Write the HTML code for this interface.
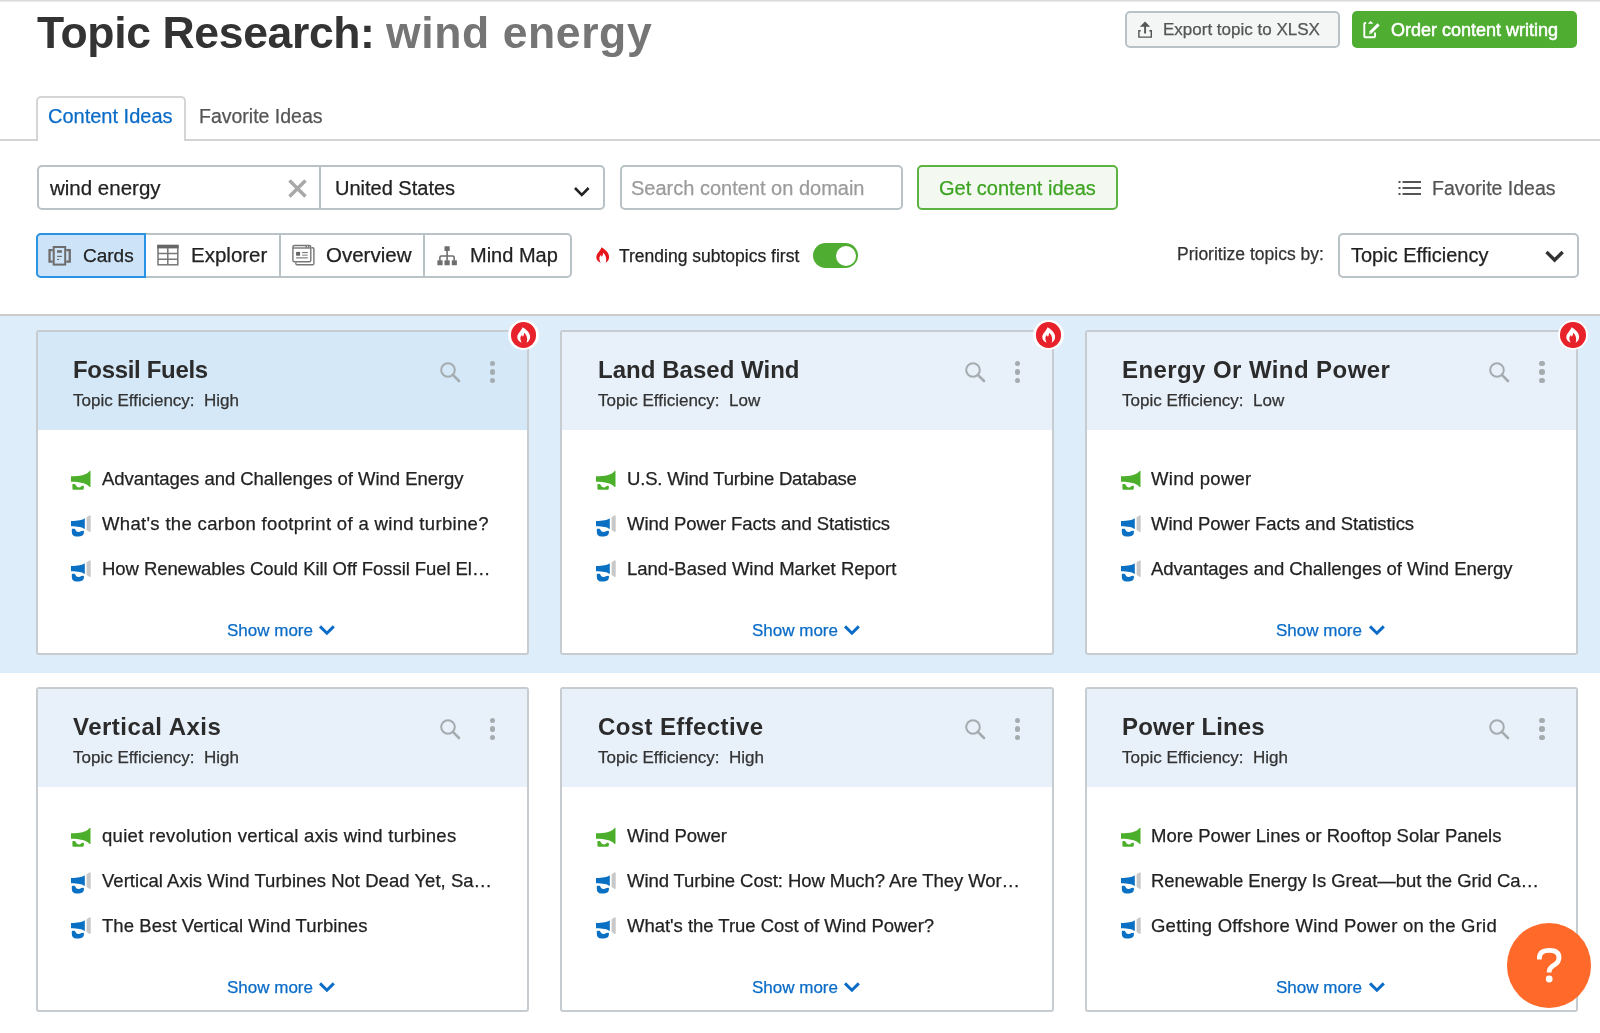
<!DOCTYPE html>
<html><head><meta charset="utf-8"><title>Topic Research</title>
<style>
html,body{margin:0;padding:0;background:#fff;width:1600px;height:1033px;overflow:hidden;position:relative;}
.t{position:absolute;white-space:nowrap;line-height:1;font-family:"Liberation Sans", sans-serif;will-change:transform;}
.b{position:absolute;}
svg.b{overflow:visible;}
</style></head><body>
<div class="b" style="left:0px;top:0px;width:1600px;height:1px;background:#d9dadc;"></div>
<div class="b" style="left:0px;top:1px;width:1600px;height:1px;background:#eceded;"></div>
<div class="t" style="left:37.00px;top:11.00px;font-size:44.5px;color:#333;font-weight:bold;letter-spacing:-0.357px;">Topic Research:</div>
<div class="t" style="left:386.00px;top:11.00px;font-size:44.5px;color:#757575;font-weight:bold;letter-spacing:0.600px;">wind energy</div>
<div class="b" style="left:1125px;top:11px;width:215px;height:37px;box-sizing:border-box;border:2px solid #b9c2c7;border-radius:5px;background:#f4f5f5;"></div>
<svg class="b" style="left:1132px;top:16px" width="28" height="26" viewBox="0 0 28 26">
<path d="M13.1,5.4 L18.1,10.8 L14.05,10.8 L14.05,17.6 L12.15,17.6 L12.15,10.8 L7.8,10.8 Z" fill="#555"/>
<path d="M8.7,14.8 L6.9,14.8 L6.9,21.1 L19.3,21.1 L19.3,14.8 L17.4,14.8" fill="none" stroke="#555" stroke-width="1.4"/>
</svg>
<div class="t" style="left:1163.00px;top:21.00px;font-size:17px;color:#555;font-weight:normal;-webkit-text-stroke:0.25px #555;">Export topic to XLSX</div>
<div class="b" style="left:1352px;top:11px;width:225px;height:37px;border-radius:5px;background:#4fae32;"></div>
<svg class="b" style="left:1358px;top:16px" width="28" height="26" viewBox="0 0 28 26">
<path d="M8.1,7 L7.3,7 Q6.3,7 6.3,8 L6.3,20.2 Q6.3,21.2 7.3,21.2 L16,21.2 Q17,21.2 17,20.2 L17,16.4" fill="none" stroke="#fff" stroke-width="1.9"/>
<path d="M9.8,7.8 L12.6,5 L15.4,7.8 Z" fill="#fff"/>
<path d="M12.2,16.8 L20.6,8.4" stroke="#fff" stroke-width="3" stroke-linecap="butt"/>
<path d="M10.8,18.4 L11.6,15.9 L13.4,17.6 Z" fill="#cfe8c5"/>
</svg>
<div class="t" style="left:1391.00px;top:21.00px;font-size:18px;color:#fff;font-weight:normal;-webkit-text-stroke:0.55px #fff;">Order content writing</div>
<div class="b" style="left:0px;top:139px;width:1600px;height:2px;background:#d3d3d3;"></div>
<div class="b" style="left:36px;top:96px;width:150px;height:45px;box-sizing:border-box;border:2px solid #d5d5d5;border-bottom:none;border-radius:5px 5px 0 0;background:#fff;"></div>
<div class="t" style="left:48.00px;top:106.00px;font-size:20px;color:#0b6cc7;font-weight:normal;-webkit-text-stroke:0.25px #0b6cc7;">Content Ideas</div>
<div class="t" style="left:199.00px;top:107.00px;font-size:19.5px;color:#555;font-weight:normal;-webkit-text-stroke:0.25px #555;">Favorite Ideas</div>
<div class="b" style="left:37px;top:165px;width:568px;height:45px;box-sizing:border-box;border:2px solid #b9c2c7;border-radius:5px;background:#fff;"></div>
<div class="b" style="left:319px;top:166px;width:2px;height:43px;background:#b9c2c7;"></div>
<div class="t" style="left:50.00px;top:178.00px;font-size:20.5px;color:#222;font-weight:normal;-webkit-text-stroke:0.25px #222;">wind energy</div>
<svg class="b" style="left:286px;top:177px" width="23" height="23" viewBox="0 0 23 23">
<path d="M3.5,3.5 L19.5,19.5 M19.5,3.5 L3.5,19.5" stroke="#a8a8a8" stroke-width="3.5"/>
</svg>
<div class="t" style="left:334.50px;top:178.00px;font-size:20px;color:#222;font-weight:normal;-webkit-text-stroke:0.25px #222;">United States</div>
<svg class="b" style="left:572px;top:184px" width="20" height="14" viewBox="0 0 20 14">
<path d="M3,4 L9.8,10.8 L16.6,4" fill="none" stroke="#222" stroke-width="2.6"/>
</svg>
<div class="b" style="left:620px;top:165px;width:283px;height:45px;box-sizing:border-box;border:2px solid #b9c2c7;border-radius:5px;background:#fff;"></div>
<div class="t" style="left:631.00px;top:178.00px;font-size:20px;color:#9b9b9b;font-weight:normal;-webkit-text-stroke:0.25px #9b9b9b;">Search content on domain</div>
<div class="b" style="left:917px;top:165px;width:201px;height:45px;box-sizing:border-box;border:2px solid #5cb342;border-radius:5px;background:#f3f8f1;"></div>
<div class="t" style="left:938.50px;top:178.00px;font-size:20px;color:#3ea423;font-weight:normal;-webkit-text-stroke:0.25px #3ea423;">Get content ideas</div>
<svg class="b" style="left:1396px;top:178px" width="28" height="20" viewBox="0 0 28 20">
<rect x="2.5" y="3" width="2" height="2" fill="#555"/><rect x="6.5" y="3" width="18.5" height="2" fill="#555"/>
<rect x="2.5" y="9" width="2" height="2" fill="#555"/><rect x="6.5" y="9" width="18.5" height="2" fill="#555"/>
<rect x="2.5" y="15" width="2" height="2" fill="#555"/><rect x="6.5" y="15" width="18.5" height="2" fill="#555"/>
</svg>
<div class="t" style="left:1431.50px;top:179.00px;font-size:19.5px;color:#555;font-weight:normal;-webkit-text-stroke:0.25px #555;">Favorite Ideas</div>
<div class="b" style="left:36px;top:233px;width:536px;height:45px;box-sizing:border-box;border:2px solid #b9c2c7;border-radius:5px;background:#fff;"></div>
<div class="b" style="left:36px;top:233px;width:110px;height:45px;box-sizing:border-box;border:2px solid #2a93e4;border-radius:5px 0 0 5px;background:#cde3f7;"></div>
<div class="b" style="left:279px;top:234px;width:2px;height:43px;background:#b9c2c7;"></div>
<div class="b" style="left:423px;top:234px;width:2px;height:43px;background:#b9c2c7;"></div>
<svg class="b" style="left:44px;top:240px" width="32" height="30" viewBox="0 0 32 30">
<g fill="none" stroke="#6d6d6d" stroke-width="2">
<rect x="9.7" y="7" width="11.5" height="17.6"/>
<path d="M8.7,10.15 L5.55,10.15 L5.55,21.55 L8.7,21.55 M22.2,10.15 L25.75,10.15 L25.75,21.55 L22.2,21.55" stroke-width="2.3"/>
</g>
<rect x="13.1" y="10.2" width="4.8" height="2.6" fill="#6d6d6d"/>
<rect x="13.1" y="15.8" width="4.8" height="1.2" fill="#6d6d6d"/>
<rect x="13.1" y="18.9" width="2.1" height="1.1" fill="#6d6d6d"/>
</svg>
<div class="t" style="left:82.50px;top:246.00px;font-size:19px;color:#222;font-weight:normal;-webkit-text-stroke:0.25px #222;">Cards</div>
<svg class="b" style="left:152px;top:240px" width="32" height="30" viewBox="0 0 32 30">
<g fill="none" stroke="#777" stroke-width="1.5">
<rect x="6" y="5.6" width="19.8" height="19.2"/>
<path d="M6,13.5 L25.8,13.5 M6,19.3 L25.8,19.3 M15.8,8 L15.8,24.8"/>
</g>
<rect x="5.2" y="4.8" width="21.4" height="3.6" fill="#666"/>
</svg>
<div class="t" style="left:191.00px;top:245.00px;font-size:20.5px;color:#222;font-weight:normal;-webkit-text-stroke:0.25px #222;">Explorer</div>
<svg class="b" style="left:288px;top:240px" width="32" height="30" viewBox="0 0 32 30">
<g fill="none" stroke="#777" stroke-width="1.4">
<path d="M23.5,7.8 L24.6,7.8 Q25.9,7.8 25.9,9.1 L25.9,23.4 Q25.9,24.7 24.6,24.7 L9.1,24.7 Q7.8,24.7 7.8,23.4 L7.8,22.6"/>
<rect x="4.9" y="5.5" width="17.9" height="16.3" rx="1.5"/>
<path d="M4.9,8 L22.8,8"/>
</g>
<rect x="17.5" y="5.5" width="1.3" height="2.5" fill="#777"/><rect x="20" y="5.5" width="1.3" height="2.5" fill="#777"/>
<rect x="8.1" y="11.9" width="4" height="3.8" fill="#666"/>
<rect x="14.1" y="12" width="5.7" height="1.1" fill="#777"/>
<rect x="14.1" y="14.6" width="5.7" height="1.1" fill="#888"/>
<rect x="8.1" y="17.2" width="11.7" height="1.3" fill="#888"/>
</svg>
<div class="t" style="left:326.00px;top:245.00px;font-size:20.5px;color:#222;font-weight:normal;-webkit-text-stroke:0.25px #222;">Overview</div>
<svg class="b" style="left:432px;top:240px" width="32" height="30" viewBox="0 0 32 30">
<g fill="#6e6e6e">
<rect x="12.5" y="6.3" width="5.2" height="4.8" rx="0.5"/>
<rect x="5.4" y="20.2" width="5.2" height="5.1" rx="0.5"/>
<rect x="12.5" y="20.2" width="5.2" height="5.1" rx="0.5"/>
<rect x="19.8" y="20.2" width="5.1" height="5.1" rx="0.5"/>
</g>
<path d="M15.1,11 L15.1,20.5 M7.9,20.5 L7.9,17.5 Q7.9,16 9.4,16 L20.7,16 Q22.2,16 22.2,17.5 L22.2,20.5" fill="none" stroke="#6e6e6e" stroke-width="1.6"/>
</svg>
<div class="t" style="left:470.00px;top:245.00px;font-size:20px;color:#222;font-weight:normal;-webkit-text-stroke:0.25px #222;">Mind Map</div>
<svg class="b" style="left:590px;top:242px" width="25" height="26" viewBox="0 0 25 26"><path d="M11.6,5.3 C14.5,7 19.1,10.5 19.1,15 C19.1,17.8 17.5,19.8 15.6,20.7 C16.5,18.5 16.8,14 13.1,10.8 C13.0,12.5 12.5,14.5 11.8,14.6 C11.2,14.6 11.0,13.5 11.2,12.8 C9.8,14 9.2,15.8 9.4,16.8 C9.6,18.5 10.2,19.8 10.8,20.7 C8,19.8 6.3,17.5 6.3,15.2 C6.3,11.5 10,9.5 11.6,5.3 Z" fill="#e5161c"/></svg>
<div class="t" style="left:619.00px;top:248.00px;font-size:17.5px;color:#222;font-weight:normal;-webkit-text-stroke:0.25px #222;">Trending subtopics first</div>
<div class="b" style="left:813px;top:243px;width:45px;height:25px;border-radius:13px;background:#4fae32;"></div>
<div class="b" style="left:835.5px;top:245.8px;width:20.299999999999955px;height:20.30000000000001px;border-radius:50%;background:#fff;"></div>
<div class="t" style="left:1176.50px;top:246.00px;font-size:17.5px;color:#333;font-weight:normal;-webkit-text-stroke:0.25px #333;">Prioritize topics by:</div>
<div class="b" style="left:1338px;top:233px;width:241px;height:45px;box-sizing:border-box;border:2px solid #b9c2c7;border-radius:5px;background:#fff;"></div>
<div class="t" style="left:1351.00px;top:245.00px;font-size:20px;color:#222;font-weight:normal;-webkit-text-stroke:0.25px #222;">Topic Efficiency</div>
<svg class="b" style="left:1542px;top:246px" width="26" height="20" viewBox="0 0 26 20">
<path d="M4.5,6 L12.6,14 L20.7,6" fill="none" stroke="#333" stroke-width="3.4"/>
</svg>
<div class="b" style="left:0px;top:314px;width:1600px;height:2px;background:#cbcbcb;"></div>
<div class="b" style="left:0px;top:316px;width:1600px;height:357px;background:#deedfa;"></div>
<div class="b" style="left:36px;top:330px;width:493px;height:325px;box-sizing:border-box;border:2px solid #c6ccd0;border-radius:3px;background:#fff;overflow:hidden;"><div style="height:98px;background:#d5e8f7"></div></div>
<div class="t" style="left:72.50px;top:358.00px;font-size:24px;color:#2b2b2b;font-weight:bold;letter-spacing:-0.327px;">Fossil Fuels</div>
<div class="t" style="left:72.50px;top:392.00px;font-size:17px;color:#333;font-weight:normal;-webkit-text-stroke:0.25px #333;">Topic Efficiency:&nbsp; High</div>
<svg class="b" style="left:435.6px;top:357.6px" width="28" height="28" viewBox="0 0 28 28"><circle cx="12" cy="12" r="6.8" fill="none" stroke="#a4acaf" stroke-width="2"/><path d="M16.9,16.9 L23,23" stroke="#a4acaf" stroke-width="2.6" stroke-linecap="round"/></svg>
<div class="b" style="left:489.7px;top:360.8px;width:5.4px;height:5.4px;border-radius:50%;background:#a4acaf"></div>
<div class="b" style="left:489.7px;top:369.3px;width:5.4px;height:5.4px;border-radius:50%;background:#a4acaf"></div>
<div class="b" style="left:489.7px;top:377.8px;width:5.4px;height:5.4px;border-radius:50%;background:#a4acaf"></div>
<svg class="b" style="left:66px;top:466px" width="30" height="28" viewBox="0 0 30 28"><path d="M5,10.3 C14,10.1 20,9.2 23.6,4.9 Q24.5,4.4 24.5,5.6 L24.5,20.3 Q24.5,21.4 23.6,20.9 C20,16.8 14,15.9 5,15.7 Z" fill="#4caf2c"/><path d="M6.4,18.7 Q6.4,18.1 7,18.1 L8.6,18.1 Q9.2,18.1 9.5,18.8 Q10.8,21.4 12.6,21.4 Q14.3,21.4 15.3,20.2 Q15.6,19.8 16.1,19.8 L17.3,19.8 Q17.9,19.8 17.9,20.4 L17.8,22.6 Q17.6,23.8 16.4,23.8 L7.6,23.8 Q6.4,23.8 6.4,22.6 Z" fill="#4caf2c"/></svg>
<div class="t" style="left:101.70px;top:470.00px;font-size:18.5px;color:#222;font-weight:normal;letter-spacing:-0.038px;-webkit-text-stroke:0.25px #222;">Advantages and Challenges of Wind Energy</div>
<svg class="b" style="left:66px;top:511px" width="30" height="28" viewBox="0 0 30 28"><path d="M5,10 C12,9.9 16,9.2 18.8,7.3 L18.8,18 C16,16.1 12,15.3 5,15.2 Z" fill="#0a70c4"/><path d="M20.6,6.3 L23.8,4.3 Q24.7,4.3 24.7,5.2 L24.7,20.2 Q24.7,21 23.8,20.9 L20.6,19 Z" fill="#c8c8c8"/><path d="M5.8,18.4 Q5.8,17.75 6.5,17.75 L8.4,17.75 Q8.9,17.75 9.2,18.4 Q10.3,20.9 12.4,20.9 Q14.2,20.9 15.3,19.9 L17.3,19.8 Q18,19.8 18,20.6 Q18,25.5 13,25.5 L10.5,25.5 Q5.8,25.5 5.8,20.5 Z" fill="#0a70c4"/></svg>
<div class="t" style="left:101.70px;top:515.00px;font-size:18.5px;color:#222;font-weight:normal;letter-spacing:0.329px;-webkit-text-stroke:0.25px #222;">What's the carbon footprint of a wind turbine?</div>
<svg class="b" style="left:66px;top:556px" width="30" height="28" viewBox="0 0 30 28"><path d="M5,10 C12,9.9 16,9.2 18.8,7.3 L18.8,18 C16,16.1 12,15.3 5,15.2 Z" fill="#0a70c4"/><path d="M20.6,6.3 L23.8,4.3 Q24.7,4.3 24.7,5.2 L24.7,20.2 Q24.7,21 23.8,20.9 L20.6,19 Z" fill="#c8c8c8"/><path d="M5.8,18.4 Q5.8,17.75 6.5,17.75 L8.4,17.75 Q8.9,17.75 9.2,18.4 Q10.3,20.9 12.4,20.9 Q14.2,20.9 15.3,19.9 L17.3,19.8 Q18,19.8 18,20.6 Q18,25.5 13,25.5 L10.5,25.5 Q5.8,25.5 5.8,20.5 Z" fill="#0a70c4"/></svg>
<div class="t" style="left:101.70px;top:560.00px;font-size:18.5px;color:#222;font-weight:normal;letter-spacing:-0.068px;-webkit-text-stroke:0.25px #222;">How Renewables Could Kill Off Fossil Fuel El…</div>
<div class="t" style="left:226.90px;top:622.00px;font-size:17px;color:#0b6cc7;font-weight:normal;-webkit-text-stroke:0.25px #0b6cc7;">Show more</div>
<svg class="b" style="left:317.0px;top:622.0px" width="20" height="14" viewBox="0 0 20 14"><path d="M3,4.4 L9.9,11.2 L16.8,4.4" fill="none" stroke="#0b6cc7" stroke-width="3"/></svg>
<div class="b" style="left:508.1px;top:319.7px;width:30.8px;height:30.8px;border-radius:50%;background:#fff"></div>
<div class="b" style="left:510.8px;top:322.4px;width:25.4px;height:25.4px;border-radius:50%;background:#e8222a"></div>
<svg class="b" style="left:510.5px;top:321.7px" width="25" height="26" viewBox="0 0 25 26"><path d="M11.6,5.3 C14.5,7 19.1,10.5 19.1,15 C19.1,17.8 17.5,19.8 15.6,20.7 C16.5,18.5 16.8,14 13.1,10.8 C13.0,12.5 12.5,14.5 11.8,14.6 C11.2,14.6 11.0,13.5 11.2,12.8 C9.8,14 9.2,15.8 9.4,16.8 C9.6,18.5 10.2,19.8 10.8,20.7 C8,19.8 6.3,17.5 6.3,15.2 C6.3,11.5 10,9.5 11.6,5.3 Z" fill="#fff"/></svg>
<div class="b" style="left:560px;top:330px;width:494px;height:325px;box-sizing:border-box;border:2px solid #c6ccd0;border-radius:3px;background:#fff;overflow:hidden;"><div style="height:98px;background:#e8f1fa"></div></div>
<div class="t" style="left:597.50px;top:358.00px;font-size:24px;color:#2b2b2b;font-weight:bold;letter-spacing:0.029px;">Land Based Wind</div>
<div class="t" style="left:597.50px;top:392.00px;font-size:17px;color:#333;font-weight:normal;-webkit-text-stroke:0.25px #333;">Topic Efficiency:&nbsp; Low</div>
<svg class="b" style="left:960.6px;top:357.6px" width="28" height="28" viewBox="0 0 28 28"><circle cx="12" cy="12" r="6.8" fill="none" stroke="#a4acaf" stroke-width="2"/><path d="M16.9,16.9 L23,23" stroke="#a4acaf" stroke-width="2.6" stroke-linecap="round"/></svg>
<div class="b" style="left:1014.7px;top:360.8px;width:5.4px;height:5.4px;border-radius:50%;background:#a4acaf"></div>
<div class="b" style="left:1014.7px;top:369.3px;width:5.4px;height:5.4px;border-radius:50%;background:#a4acaf"></div>
<div class="b" style="left:1014.7px;top:377.8px;width:5.4px;height:5.4px;border-radius:50%;background:#a4acaf"></div>
<svg class="b" style="left:591px;top:466px" width="30" height="28" viewBox="0 0 30 28"><path d="M5,10.3 C14,10.1 20,9.2 23.6,4.9 Q24.5,4.4 24.5,5.6 L24.5,20.3 Q24.5,21.4 23.6,20.9 C20,16.8 14,15.9 5,15.7 Z" fill="#4caf2c"/><path d="M6.4,18.7 Q6.4,18.1 7,18.1 L8.6,18.1 Q9.2,18.1 9.5,18.8 Q10.8,21.4 12.6,21.4 Q14.3,21.4 15.3,20.2 Q15.6,19.8 16.1,19.8 L17.3,19.8 Q17.9,19.8 17.9,20.4 L17.8,22.6 Q17.6,23.8 16.4,23.8 L7.6,23.8 Q6.4,23.8 6.4,22.6 Z" fill="#4caf2c"/></svg>
<div class="t" style="left:626.70px;top:470.00px;font-size:18.5px;color:#222;font-weight:normal;letter-spacing:-0.184px;-webkit-text-stroke:0.25px #222;">U.S. Wind Turbine Database</div>
<svg class="b" style="left:591px;top:511px" width="30" height="28" viewBox="0 0 30 28"><path d="M5,10 C12,9.9 16,9.2 18.8,7.3 L18.8,18 C16,16.1 12,15.3 5,15.2 Z" fill="#0a70c4"/><path d="M20.6,6.3 L23.8,4.3 Q24.7,4.3 24.7,5.2 L24.7,20.2 Q24.7,21 23.8,20.9 L20.6,19 Z" fill="#c8c8c8"/><path d="M5.8,18.4 Q5.8,17.75 6.5,17.75 L8.4,17.75 Q8.9,17.75 9.2,18.4 Q10.3,20.9 12.4,20.9 Q14.2,20.9 15.3,19.9 L17.3,19.8 Q18,19.8 18,20.6 Q18,25.5 13,25.5 L10.5,25.5 Q5.8,25.5 5.8,20.5 Z" fill="#0a70c4"/></svg>
<div class="t" style="left:626.70px;top:515.00px;font-size:18.5px;color:#222;font-weight:normal;letter-spacing:-0.073px;-webkit-text-stroke:0.25px #222;">Wind Power Facts and Statistics</div>
<svg class="b" style="left:591px;top:556px" width="30" height="28" viewBox="0 0 30 28"><path d="M5,10 C12,9.9 16,9.2 18.8,7.3 L18.8,18 C16,16.1 12,15.3 5,15.2 Z" fill="#0a70c4"/><path d="M20.6,6.3 L23.8,4.3 Q24.7,4.3 24.7,5.2 L24.7,20.2 Q24.7,21 23.8,20.9 L20.6,19 Z" fill="#c8c8c8"/><path d="M5.8,18.4 Q5.8,17.75 6.5,17.75 L8.4,17.75 Q8.9,17.75 9.2,18.4 Q10.3,20.9 12.4,20.9 Q14.2,20.9 15.3,19.9 L17.3,19.8 Q18,19.8 18,20.6 Q18,25.5 13,25.5 L10.5,25.5 Q5.8,25.5 5.8,20.5 Z" fill="#0a70c4"/></svg>
<div class="t" style="left:626.70px;top:560.00px;font-size:18.5px;color:#222;font-weight:normal;-webkit-text-stroke:0.25px #222;">Land-Based Wind Market Report</div>
<div class="t" style="left:751.90px;top:622.00px;font-size:17px;color:#0b6cc7;font-weight:normal;-webkit-text-stroke:0.25px #0b6cc7;">Show more</div>
<svg class="b" style="left:842.0px;top:622.0px" width="20" height="14" viewBox="0 0 20 14"><path d="M3,4.4 L9.9,11.2 L16.8,4.4" fill="none" stroke="#0b6cc7" stroke-width="3"/></svg>
<div class="b" style="left:1033.1px;top:319.7px;width:30.8px;height:30.8px;border-radius:50%;background:#fff"></div>
<div class="b" style="left:1035.8px;top:322.4px;width:25.4px;height:25.4px;border-radius:50%;background:#e8222a"></div>
<svg class="b" style="left:1035.5px;top:321.7px" width="25" height="26" viewBox="0 0 25 26"><path d="M11.6,5.3 C14.5,7 19.1,10.5 19.1,15 C19.1,17.8 17.5,19.8 15.6,20.7 C16.5,18.5 16.8,14 13.1,10.8 C13.0,12.5 12.5,14.5 11.8,14.6 C11.2,14.6 11.0,13.5 11.2,12.8 C9.8,14 9.2,15.8 9.4,16.8 C9.6,18.5 10.2,19.8 10.8,20.7 C8,19.8 6.3,17.5 6.3,15.2 C6.3,11.5 10,9.5 11.6,5.3 Z" fill="#fff"/></svg>
<div class="b" style="left:1085px;top:330px;width:493px;height:325px;box-sizing:border-box;border:2px solid #c6ccd0;border-radius:3px;background:#fff;overflow:hidden;"><div style="height:98px;background:#e8f1fa"></div></div>
<div class="t" style="left:1122.00px;top:358.00px;font-size:24px;color:#2b2b2b;font-weight:bold;letter-spacing:0.421px;">Energy Or Wind Power</div>
<div class="t" style="left:1122.00px;top:392.00px;font-size:17px;color:#333;font-weight:normal;-webkit-text-stroke:0.25px #333;">Topic Efficiency:&nbsp; Low</div>
<svg class="b" style="left:1485.1px;top:357.6px" width="28" height="28" viewBox="0 0 28 28"><circle cx="12" cy="12" r="6.8" fill="none" stroke="#a4acaf" stroke-width="2"/><path d="M16.9,16.9 L23,23" stroke="#a4acaf" stroke-width="2.6" stroke-linecap="round"/></svg>
<div class="b" style="left:1539.2px;top:360.8px;width:5.4px;height:5.4px;border-radius:50%;background:#a4acaf"></div>
<div class="b" style="left:1539.2px;top:369.3px;width:5.4px;height:5.4px;border-radius:50%;background:#a4acaf"></div>
<div class="b" style="left:1539.2px;top:377.8px;width:5.4px;height:5.4px;border-radius:50%;background:#a4acaf"></div>
<svg class="b" style="left:1115.5px;top:466px" width="30" height="28" viewBox="0 0 30 28"><path d="M5,10.3 C14,10.1 20,9.2 23.6,4.9 Q24.5,4.4 24.5,5.6 L24.5,20.3 Q24.5,21.4 23.6,20.9 C20,16.8 14,15.9 5,15.7 Z" fill="#4caf2c"/><path d="M6.4,18.7 Q6.4,18.1 7,18.1 L8.6,18.1 Q9.2,18.1 9.5,18.8 Q10.8,21.4 12.6,21.4 Q14.3,21.4 15.3,20.2 Q15.6,19.8 16.1,19.8 L17.3,19.8 Q17.9,19.8 17.9,20.4 L17.8,22.6 Q17.6,23.8 16.4,23.8 L7.6,23.8 Q6.4,23.8 6.4,22.6 Z" fill="#4caf2c"/></svg>
<div class="t" style="left:1151.20px;top:470.00px;font-size:18.5px;color:#222;font-weight:normal;letter-spacing:0.289px;-webkit-text-stroke:0.25px #222;">Wind power</div>
<svg class="b" style="left:1115.5px;top:511px" width="30" height="28" viewBox="0 0 30 28"><path d="M5,10 C12,9.9 16,9.2 18.8,7.3 L18.8,18 C16,16.1 12,15.3 5,15.2 Z" fill="#0a70c4"/><path d="M20.6,6.3 L23.8,4.3 Q24.7,4.3 24.7,5.2 L24.7,20.2 Q24.7,21 23.8,20.9 L20.6,19 Z" fill="#c8c8c8"/><path d="M5.8,18.4 Q5.8,17.75 6.5,17.75 L8.4,17.75 Q8.9,17.75 9.2,18.4 Q10.3,20.9 12.4,20.9 Q14.2,20.9 15.3,19.9 L17.3,19.8 Q18,19.8 18,20.6 Q18,25.5 13,25.5 L10.5,25.5 Q5.8,25.5 5.8,20.5 Z" fill="#0a70c4"/></svg>
<div class="t" style="left:1151.20px;top:515.00px;font-size:18.5px;color:#222;font-weight:normal;letter-spacing:-0.073px;-webkit-text-stroke:0.25px #222;">Wind Power Facts and Statistics</div>
<svg class="b" style="left:1115.5px;top:556px" width="30" height="28" viewBox="0 0 30 28"><path d="M5,10 C12,9.9 16,9.2 18.8,7.3 L18.8,18 C16,16.1 12,15.3 5,15.2 Z" fill="#0a70c4"/><path d="M20.6,6.3 L23.8,4.3 Q24.7,4.3 24.7,5.2 L24.7,20.2 Q24.7,21 23.8,20.9 L20.6,19 Z" fill="#c8c8c8"/><path d="M5.8,18.4 Q5.8,17.75 6.5,17.75 L8.4,17.75 Q8.9,17.75 9.2,18.4 Q10.3,20.9 12.4,20.9 Q14.2,20.9 15.3,19.9 L17.3,19.8 Q18,19.8 18,20.6 Q18,25.5 13,25.5 L10.5,25.5 Q5.8,25.5 5.8,20.5 Z" fill="#0a70c4"/></svg>
<div class="t" style="left:1151.20px;top:560.00px;font-size:18.5px;color:#222;font-weight:normal;letter-spacing:-0.038px;-webkit-text-stroke:0.25px #222;">Advantages and Challenges of Wind Energy</div>
<div class="t" style="left:1276.40px;top:622.00px;font-size:17px;color:#0b6cc7;font-weight:normal;-webkit-text-stroke:0.25px #0b6cc7;">Show more</div>
<svg class="b" style="left:1366.5px;top:622.0px" width="20" height="14" viewBox="0 0 20 14"><path d="M3,4.4 L9.9,11.2 L16.8,4.4" fill="none" stroke="#0b6cc7" stroke-width="3"/></svg>
<div class="b" style="left:1557.6px;top:319.7px;width:30.8px;height:30.8px;border-radius:50%;background:#fff"></div>
<div class="b" style="left:1560.3px;top:322.4px;width:25.4px;height:25.4px;border-radius:50%;background:#e8222a"></div>
<svg class="b" style="left:1560.0px;top:321.7px" width="25" height="26" viewBox="0 0 25 26"><path d="M11.6,5.3 C14.5,7 19.1,10.5 19.1,15 C19.1,17.8 17.5,19.8 15.6,20.7 C16.5,18.5 16.8,14 13.1,10.8 C13.0,12.5 12.5,14.5 11.8,14.6 C11.2,14.6 11.0,13.5 11.2,12.8 C9.8,14 9.2,15.8 9.4,16.8 C9.6,18.5 10.2,19.8 10.8,20.7 C8,19.8 6.3,17.5 6.3,15.2 C6.3,11.5 10,9.5 11.6,5.3 Z" fill="#fff"/></svg>
<div class="b" style="left:36px;top:687px;width:493px;height:325px;box-sizing:border-box;border:2px solid #c6ccd0;border-radius:3px;background:#fff;overflow:hidden;"><div style="height:98px;background:#e8f1fa"></div></div>
<div class="t" style="left:72.50px;top:715.00px;font-size:24px;color:#2b2b2b;font-weight:bold;letter-spacing:0.500px;">Vertical Axis</div>
<div class="t" style="left:72.50px;top:749.00px;font-size:17px;color:#333;font-weight:normal;-webkit-text-stroke:0.25px #333;">Topic Efficiency:&nbsp; High</div>
<svg class="b" style="left:435.6px;top:714.6px" width="28" height="28" viewBox="0 0 28 28"><circle cx="12" cy="12" r="6.8" fill="none" stroke="#a4acaf" stroke-width="2"/><path d="M16.9,16.9 L23,23" stroke="#a4acaf" stroke-width="2.6" stroke-linecap="round"/></svg>
<div class="b" style="left:489.7px;top:717.8px;width:5.4px;height:5.4px;border-radius:50%;background:#a4acaf"></div>
<div class="b" style="left:489.7px;top:726.3px;width:5.4px;height:5.4px;border-radius:50%;background:#a4acaf"></div>
<div class="b" style="left:489.7px;top:734.8px;width:5.4px;height:5.4px;border-radius:50%;background:#a4acaf"></div>
<svg class="b" style="left:66px;top:823px" width="30" height="28" viewBox="0 0 30 28"><path d="M5,10.3 C14,10.1 20,9.2 23.6,4.9 Q24.5,4.4 24.5,5.6 L24.5,20.3 Q24.5,21.4 23.6,20.9 C20,16.8 14,15.9 5,15.7 Z" fill="#4caf2c"/><path d="M6.4,18.7 Q6.4,18.1 7,18.1 L8.6,18.1 Q9.2,18.1 9.5,18.8 Q10.8,21.4 12.6,21.4 Q14.3,21.4 15.3,20.2 Q15.6,19.8 16.1,19.8 L17.3,19.8 Q17.9,19.8 17.9,20.4 L17.8,22.6 Q17.6,23.8 16.4,23.8 L7.6,23.8 Q6.4,23.8 6.4,22.6 Z" fill="#4caf2c"/></svg>
<div class="t" style="left:101.70px;top:827.00px;font-size:18.5px;color:#222;font-weight:normal;letter-spacing:0.298px;-webkit-text-stroke:0.25px #222;">quiet revolution vertical axis wind turbines</div>
<svg class="b" style="left:66px;top:868px" width="30" height="28" viewBox="0 0 30 28"><path d="M5,10 C12,9.9 16,9.2 18.8,7.3 L18.8,18 C16,16.1 12,15.3 5,15.2 Z" fill="#0a70c4"/><path d="M20.6,6.3 L23.8,4.3 Q24.7,4.3 24.7,5.2 L24.7,20.2 Q24.7,21 23.8,20.9 L20.6,19 Z" fill="#c8c8c8"/><path d="M5.8,18.4 Q5.8,17.75 6.5,17.75 L8.4,17.75 Q8.9,17.75 9.2,18.4 Q10.3,20.9 12.4,20.9 Q14.2,20.9 15.3,19.9 L17.3,19.8 Q18,19.8 18,20.6 Q18,25.5 13,25.5 L10.5,25.5 Q5.8,25.5 5.8,20.5 Z" fill="#0a70c4"/></svg>
<div class="t" style="left:101.70px;top:872.00px;font-size:18.5px;color:#222;font-weight:normal;letter-spacing:0.032px;-webkit-text-stroke:0.25px #222;">Vertical Axis Wind Turbines Not Dead Yet, Sa…</div>
<svg class="b" style="left:66px;top:913px" width="30" height="28" viewBox="0 0 30 28"><path d="M5,10 C12,9.9 16,9.2 18.8,7.3 L18.8,18 C16,16.1 12,15.3 5,15.2 Z" fill="#0a70c4"/><path d="M20.6,6.3 L23.8,4.3 Q24.7,4.3 24.7,5.2 L24.7,20.2 Q24.7,21 23.8,20.9 L20.6,19 Z" fill="#c8c8c8"/><path d="M5.8,18.4 Q5.8,17.75 6.5,17.75 L8.4,17.75 Q8.9,17.75 9.2,18.4 Q10.3,20.9 12.4,20.9 Q14.2,20.9 15.3,19.9 L17.3,19.8 Q18,19.8 18,20.6 Q18,25.5 13,25.5 L10.5,25.5 Q5.8,25.5 5.8,20.5 Z" fill="#0a70c4"/></svg>
<div class="t" style="left:101.70px;top:917.00px;font-size:18.5px;color:#222;font-weight:normal;letter-spacing:0.073px;-webkit-text-stroke:0.25px #222;">The Best Vertical Wind Turbines</div>
<div class="t" style="left:226.90px;top:979.00px;font-size:17px;color:#0b6cc7;font-weight:normal;-webkit-text-stroke:0.25px #0b6cc7;">Show more</div>
<svg class="b" style="left:317.0px;top:979.0px" width="20" height="14" viewBox="0 0 20 14"><path d="M3,4.4 L9.9,11.2 L16.8,4.4" fill="none" stroke="#0b6cc7" stroke-width="3"/></svg>
<div class="b" style="left:560px;top:687px;width:494px;height:325px;box-sizing:border-box;border:2px solid #c6ccd0;border-radius:3px;background:#fff;overflow:hidden;"><div style="height:98px;background:#e8f1fa"></div></div>
<div class="t" style="left:597.50px;top:715.00px;font-size:24px;color:#2b2b2b;font-weight:bold;letter-spacing:0.385px;">Cost Effective</div>
<div class="t" style="left:597.50px;top:749.00px;font-size:17px;color:#333;font-weight:normal;-webkit-text-stroke:0.25px #333;">Topic Efficiency:&nbsp; High</div>
<svg class="b" style="left:960.6px;top:714.6px" width="28" height="28" viewBox="0 0 28 28"><circle cx="12" cy="12" r="6.8" fill="none" stroke="#a4acaf" stroke-width="2"/><path d="M16.9,16.9 L23,23" stroke="#a4acaf" stroke-width="2.6" stroke-linecap="round"/></svg>
<div class="b" style="left:1014.7px;top:717.8px;width:5.4px;height:5.4px;border-radius:50%;background:#a4acaf"></div>
<div class="b" style="left:1014.7px;top:726.3px;width:5.4px;height:5.4px;border-radius:50%;background:#a4acaf"></div>
<div class="b" style="left:1014.7px;top:734.8px;width:5.4px;height:5.4px;border-radius:50%;background:#a4acaf"></div>
<svg class="b" style="left:591px;top:823px" width="30" height="28" viewBox="0 0 30 28"><path d="M5,10.3 C14,10.1 20,9.2 23.6,4.9 Q24.5,4.4 24.5,5.6 L24.5,20.3 Q24.5,21.4 23.6,20.9 C20,16.8 14,15.9 5,15.7 Z" fill="#4caf2c"/><path d="M6.4,18.7 Q6.4,18.1 7,18.1 L8.6,18.1 Q9.2,18.1 9.5,18.8 Q10.8,21.4 12.6,21.4 Q14.3,21.4 15.3,20.2 Q15.6,19.8 16.1,19.8 L17.3,19.8 Q17.9,19.8 17.9,20.4 L17.8,22.6 Q17.6,23.8 16.4,23.8 L7.6,23.8 Q6.4,23.8 6.4,22.6 Z" fill="#4caf2c"/></svg>
<div class="t" style="left:626.70px;top:827.00px;font-size:18.5px;color:#222;font-weight:normal;letter-spacing:0.022px;-webkit-text-stroke:0.25px #222;">Wind Power</div>
<svg class="b" style="left:591px;top:868px" width="30" height="28" viewBox="0 0 30 28"><path d="M5,10 C12,9.9 16,9.2 18.8,7.3 L18.8,18 C16,16.1 12,15.3 5,15.2 Z" fill="#0a70c4"/><path d="M20.6,6.3 L23.8,4.3 Q24.7,4.3 24.7,5.2 L24.7,20.2 Q24.7,21 23.8,20.9 L20.6,19 Z" fill="#c8c8c8"/><path d="M5.8,18.4 Q5.8,17.75 6.5,17.75 L8.4,17.75 Q8.9,17.75 9.2,18.4 Q10.3,20.9 12.4,20.9 Q14.2,20.9 15.3,19.9 L17.3,19.8 Q18,19.8 18,20.6 Q18,25.5 13,25.5 L10.5,25.5 Q5.8,25.5 5.8,20.5 Z" fill="#0a70c4"/></svg>
<div class="t" style="left:626.70px;top:872.00px;font-size:18.5px;color:#222;font-weight:normal;letter-spacing:-0.078px;-webkit-text-stroke:0.25px #222;">Wind Turbine Cost: How Much? Are They Wor…</div>
<svg class="b" style="left:591px;top:913px" width="30" height="28" viewBox="0 0 30 28"><path d="M5,10 C12,9.9 16,9.2 18.8,7.3 L18.8,18 C16,16.1 12,15.3 5,15.2 Z" fill="#0a70c4"/><path d="M20.6,6.3 L23.8,4.3 Q24.7,4.3 24.7,5.2 L24.7,20.2 Q24.7,21 23.8,20.9 L20.6,19 Z" fill="#c8c8c8"/><path d="M5.8,18.4 Q5.8,17.75 6.5,17.75 L8.4,17.75 Q8.9,17.75 9.2,18.4 Q10.3,20.9 12.4,20.9 Q14.2,20.9 15.3,19.9 L17.3,19.8 Q18,19.8 18,20.6 Q18,25.5 13,25.5 L10.5,25.5 Q5.8,25.5 5.8,20.5 Z" fill="#0a70c4"/></svg>
<div class="t" style="left:626.70px;top:917.00px;font-size:18.5px;color:#222;font-weight:normal;letter-spacing:-0.024px;-webkit-text-stroke:0.25px #222;">What's the True Cost of Wind Power?</div>
<div class="t" style="left:751.90px;top:979.00px;font-size:17px;color:#0b6cc7;font-weight:normal;-webkit-text-stroke:0.25px #0b6cc7;">Show more</div>
<svg class="b" style="left:842.0px;top:979.0px" width="20" height="14" viewBox="0 0 20 14"><path d="M3,4.4 L9.9,11.2 L16.8,4.4" fill="none" stroke="#0b6cc7" stroke-width="3"/></svg>
<div class="b" style="left:1085px;top:687px;width:493px;height:325px;box-sizing:border-box;border:2px solid #c6ccd0;border-radius:3px;background:#fff;overflow:hidden;"><div style="height:98px;background:#e8f1fa"></div></div>
<div class="t" style="left:1122.00px;top:715.00px;font-size:24px;color:#2b2b2b;font-weight:bold;letter-spacing:0.120px;">Power Lines</div>
<div class="t" style="left:1122.00px;top:749.00px;font-size:17px;color:#333;font-weight:normal;-webkit-text-stroke:0.25px #333;">Topic Efficiency:&nbsp; High</div>
<svg class="b" style="left:1485.1px;top:714.6px" width="28" height="28" viewBox="0 0 28 28"><circle cx="12" cy="12" r="6.8" fill="none" stroke="#a4acaf" stroke-width="2"/><path d="M16.9,16.9 L23,23" stroke="#a4acaf" stroke-width="2.6" stroke-linecap="round"/></svg>
<div class="b" style="left:1539.2px;top:717.8px;width:5.4px;height:5.4px;border-radius:50%;background:#a4acaf"></div>
<div class="b" style="left:1539.2px;top:726.3px;width:5.4px;height:5.4px;border-radius:50%;background:#a4acaf"></div>
<div class="b" style="left:1539.2px;top:734.8px;width:5.4px;height:5.4px;border-radius:50%;background:#a4acaf"></div>
<svg class="b" style="left:1115.5px;top:823px" width="30" height="28" viewBox="0 0 30 28"><path d="M5,10.3 C14,10.1 20,9.2 23.6,4.9 Q24.5,4.4 24.5,5.6 L24.5,20.3 Q24.5,21.4 23.6,20.9 C20,16.8 14,15.9 5,15.7 Z" fill="#4caf2c"/><path d="M6.4,18.7 Q6.4,18.1 7,18.1 L8.6,18.1 Q9.2,18.1 9.5,18.8 Q10.8,21.4 12.6,21.4 Q14.3,21.4 15.3,20.2 Q15.6,19.8 16.1,19.8 L17.3,19.8 Q17.9,19.8 17.9,20.4 L17.8,22.6 Q17.6,23.8 16.4,23.8 L7.6,23.8 Q6.4,23.8 6.4,22.6 Z" fill="#4caf2c"/></svg>
<div class="t" style="left:1151.20px;top:827.00px;font-size:18.5px;color:#222;font-weight:normal;letter-spacing:-0.005px;-webkit-text-stroke:0.25px #222;">More Power Lines or Rooftop Solar Panels</div>
<svg class="b" style="left:1115.5px;top:868px" width="30" height="28" viewBox="0 0 30 28"><path d="M5,10 C12,9.9 16,9.2 18.8,7.3 L18.8,18 C16,16.1 12,15.3 5,15.2 Z" fill="#0a70c4"/><path d="M20.6,6.3 L23.8,4.3 Q24.7,4.3 24.7,5.2 L24.7,20.2 Q24.7,21 23.8,20.9 L20.6,19 Z" fill="#c8c8c8"/><path d="M5.8,18.4 Q5.8,17.75 6.5,17.75 L8.4,17.75 Q8.9,17.75 9.2,18.4 Q10.3,20.9 12.4,20.9 Q14.2,20.9 15.3,19.9 L17.3,19.8 Q18,19.8 18,20.6 Q18,25.5 13,25.5 L10.5,25.5 Q5.8,25.5 5.8,20.5 Z" fill="#0a70c4"/></svg>
<div class="t" style="left:1151.20px;top:872.00px;font-size:18.5px;color:#222;font-weight:normal;letter-spacing:-0.039px;-webkit-text-stroke:0.25px #222;">Renewable Energy Is Great—but the Grid Ca…</div>
<svg class="b" style="left:1115.5px;top:913px" width="30" height="28" viewBox="0 0 30 28"><path d="M5,10 C12,9.9 16,9.2 18.8,7.3 L18.8,18 C16,16.1 12,15.3 5,15.2 Z" fill="#0a70c4"/><path d="M20.6,6.3 L23.8,4.3 Q24.7,4.3 24.7,5.2 L24.7,20.2 Q24.7,21 23.8,20.9 L20.6,19 Z" fill="#c8c8c8"/><path d="M5.8,18.4 Q5.8,17.75 6.5,17.75 L8.4,17.75 Q8.9,17.75 9.2,18.4 Q10.3,20.9 12.4,20.9 Q14.2,20.9 15.3,19.9 L17.3,19.8 Q18,19.8 18,20.6 Q18,25.5 13,25.5 L10.5,25.5 Q5.8,25.5 5.8,20.5 Z" fill="#0a70c4"/></svg>
<div class="t" style="left:1151.20px;top:917.00px;font-size:18.5px;color:#222;font-weight:normal;letter-spacing:0.232px;-webkit-text-stroke:0.25px #222;">Getting Offshore Wind Power on the Grid</div>
<div class="t" style="left:1276.40px;top:979.00px;font-size:17px;color:#0b6cc7;font-weight:normal;-webkit-text-stroke:0.25px #0b6cc7;">Show more</div>
<svg class="b" style="left:1366.5px;top:979.0px" width="20" height="14" viewBox="0 0 20 14"><path d="M3,4.4 L9.9,11.2 L16.8,4.4" fill="none" stroke="#0b6cc7" stroke-width="3"/></svg>
<div class="b" style="left:1506.7px;top:923.1px;width:84.59999999999991px;height:84.60000000000002px;border-radius:50%;background:#ff6a2b;"></div>
<svg class="b" style="left:1529px;top:940px" width="40" height="50" viewBox="0 0 40 50">
<path d="M10.4,19.6 L10.4,18 Q10.4,10.4 20.2,10.4 Q30,10.4 30,17.5 Q30,22 25.5,24.8 Q20.2,28 20.2,31.5 L20.2,32.6" fill="none" stroke="#fff" stroke-width="4.8"/>
<circle cx="20.2" cy="39" r="3.4" fill="#fff"/>
</svg>
</body></html>
